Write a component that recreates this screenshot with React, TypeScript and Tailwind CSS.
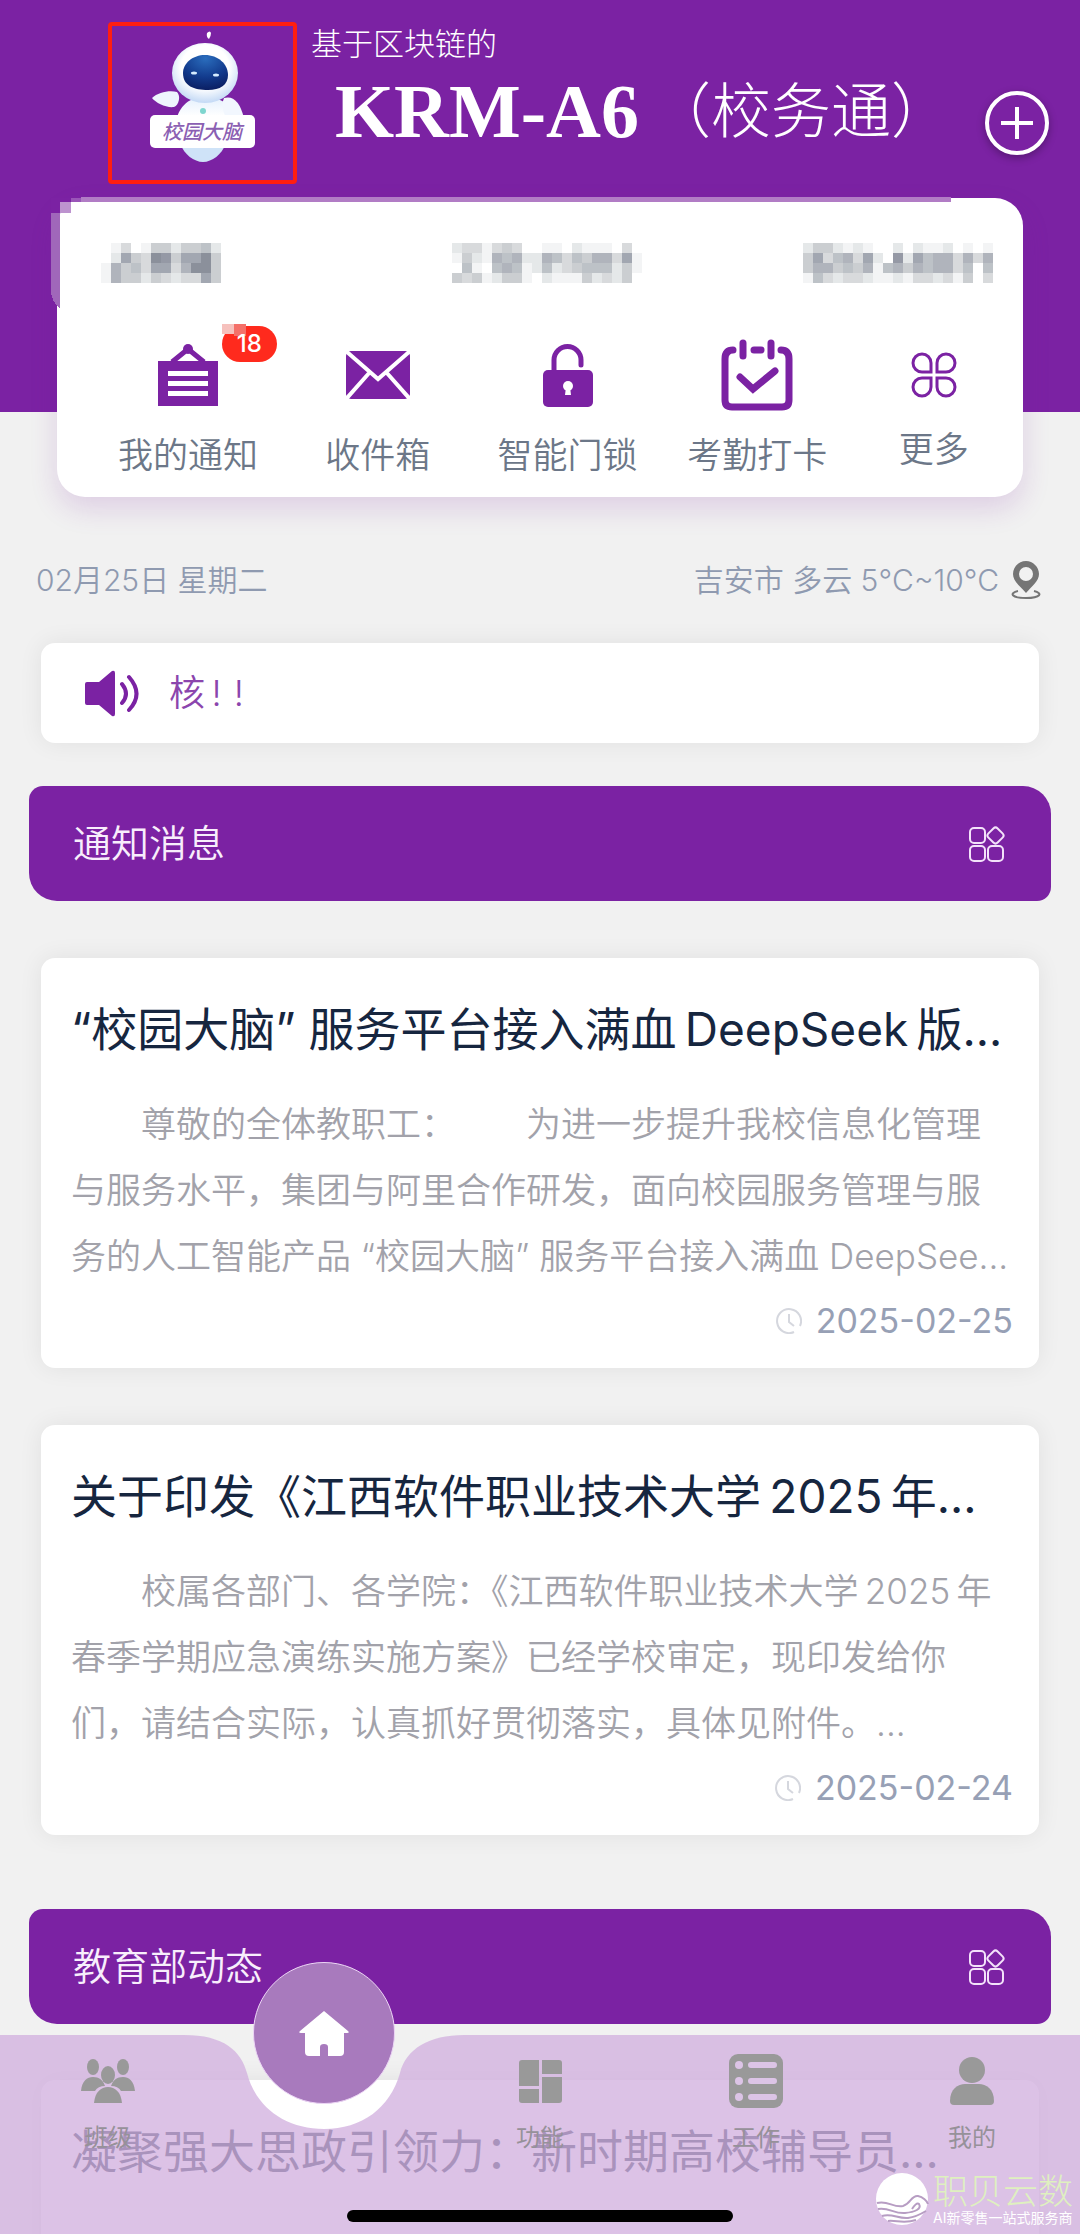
import React from 'react';
import { clsx } from 'clsx';

interface NewsItem {
  title: string;
  summary?: string;
  date?: string;
}

const NEWS: NewsItem[] = [
  {
    title: '“校园大脑” 服务平台接入满血\u2009DeepSeek\u2009版...',
    summary:
      '尊敬的全体教职工：\u2002\u2002\u2002\u2002为进一步提升我校信息化管理与服务水平，集团与阿里合作研发，面向校园服务管理与服务的人工智能产品 “校园大脑” 服务平台接入满血 DeepSee...',
    date: '2025-02-25',
  },
  {
    title: '关于印发《江西软件职业技术大学\u20092025\u2009年...',
    summary:
      '校属各部门、各学院：《江西软件职业技术大学\u20092025\u2009年春季学期应急演练实施方案》已经学校审定，现印发给你们，请结合实际，认真抓好贯彻落实，具体见附件。...',
    date: '2025-02-24',
  },
];

// Masked user fields, one digit per cell, higher is darker
const MASKED_NAME = ['013014424452', '027439847794', '164537736994', '164424323374'];
const MASKED_NUMBER = [
  '2331343001102111030',
  '1421656226535466371',
  '0510565125234555241',
  '4341244102111423240',
];
const MASKED_DEPT = [
  '2442121002021120101',
  '4735637208275663636',
  '4664546156465663505',
  '1532332112133231403',
];
const SHADES = [
  '#ffffff',
  '#f3f4f5',
  '#e5e8e9',
  '#d8dadc',
  '#cbced1',
  '#bdc2c7',
  '#b0b4bc',
  '#a2a7b1',
  '#9599a5',
  '#8b909b',
];

const Mosaic: React.FC<{ rows: string[]; label: string }> = ({ rows, label }) => (
  <svg
    role="img"
    aria-label={label}
    width={rows[0].length * 10}
    height={rows.length * 10}
    shapeRendering="crispEdges"
  >
    {rows.map((row, y) =>
      row.split('').map((cell, x) => (
        <rect key={`${x}-${y}`} x={x * 10} y={y * 10} width="10" height="10" fill={SHADES[Number(cell)]} />
      ))
    )}
  </svg>
);

const RobotLogo = () => (
  <svg viewBox="0 0 181 154" className="h-full w-full" role="img" aria-label="校园大脑">
    <defs>
      <radialGradient id="shell" cx="0.5" cy="0.4" r="0.6">
        <stop offset="0.6" stopColor="#ffffff" />
        <stop offset="1" stopColor="#c3d9f5" />
      </radialGradient>
      <linearGradient id="body" x1="0" y1="0" x2="0" y2="1">
        <stop offset="0" stopColor="#e4f0fd" />
        <stop offset="0.6" stopColor="#ffffff" />
        <stop offset="1" stopColor="#a9ccf0" />
      </linearGradient>
      <radialGradient id="visor" cx="0.5" cy="0.1" r="0.9">
        <stop offset="0" stopColor="#2a6dbd" />
        <stop offset="0.6" stopColor="#123a8c" />
        <stop offset="1" stopColor="#0b1f63" />
      </radialGradient>
    </defs>
    <path d="M95 7 q3 -3 4 0 q0 3 -2 6 q-3 -2 -2 -6z" fill="#fff" />
    <path d="M63 103 C64 82 76 71 92 71 C112 71 127 84 131 103z" fill="url(#body)" />
    <path d="M112 72 q14 -4 20 20 l0 6 l-18 -6 q-6 -12 -2 -20z" fill="#f2f7fe" />
    <ellipse cx="93" cy="47" rx="33" ry="30" fill="url(#shell)" />
    <path
      d="M71 47 C71 37 81 29 93 29 C106 29 116 38 116 49 C116 59 108 64 96 64 C82 64 71 60 71 47z"
      fill="url(#visor)"
    />
    <ellipse cx="82" cy="47" rx="3" ry="1.5" fill="#d6ecff" />
    <ellipse cx="104" cy="49" rx="3" ry="1.5" fill="#d6ecff" />
    <path d="M40 72 C46 66 58 64 65 66 C69 70 67 79 62 81 C54 82 44 77 40 72z" fill="#eef5fd" />
    <circle cx="91" cy="85" r="3" fill="#7fd6cf" />
    <path d="M69 119 H113 C110 128 100 136 91 136 C82 136 72 128 69 119z" fill="#cfe3f8" />
    <rect x="38" y="89" width="105" height="33" rx="5" fill="#fff" />
    <text x="90" y="113" textAnchor="middle" fontSize="20" fontStyle="italic" fontWeight="500" fill="#8b5fb3">
      校园大脑
    </text>
  </svg>
);

const NoticeIcon = () => (
  <svg width="60" height="62" viewBox="0 0 60 62" fill="#7b22a3">
    <path d="M14 18 L30 5 L46 18" fill="none" stroke="#7b22a3" strokeWidth="5" />
    <circle cx="30" cy="5" r="5" />
    <path fillRule="evenodd" d="M0 17H60V62H0Z M10 27V32H50V27Z M10 37V42H50V37Z M10 47V52H50V47Z" />
  </svg>
);

const MailIcon = () => (
  <svg width="64" height="48" viewBox="0 0 64 48">
    <rect width="64" height="48" rx="5" fill="#7b22a3" />
    <path d="M1 1 L32 28 L63 1 M1 47 L24 21 M63 47 L40 21" fill="none" stroke="#fff" strokeWidth="4" />
  </svg>
);

const LockIcon = () => (
  <svg width="50" height="64" viewBox="0 0 50 64">
    <path d="M11 30 V17 a13 13 0 0 1 27 0 V22" fill="none" stroke="#7b22a3" strokeWidth="5" strokeLinecap="round" />
    <rect y="27" width="50" height="37" rx="5" fill="#7b22a3" />
    <circle cx="25" cy="43" r="5" fill="#fff" />
    <path d="M23 44 H27 L28 52 H22Z" fill="#fff" />
  </svg>
);

const CalendarIcon = () => (
  <svg width="72" height="72" viewBox="0 0 72 72" fill="none" stroke="#7b22a3" strokeWidth="7" strokeLinecap="round">
    <path d="M12 11 Q4 11 4 20 V61 Q4 68 11 68 H61 Q68 68 68 61 V20 Q68 11 60 11" />
    <path d="M22 4 V17 M50 4 V17 M33 11 H40 M19 38 L32 50 L54 32" />
  </svg>
);

const MoreIcon = () => (
  <svg width="46" height="46" viewBox="0 0 46 46" fill="none" stroke="#7b22a3" strokeWidth="3">
    <path d="M20 20 H11 A9 9 0 1 1 20 11Z" />
    <path d="M26 20 H35 A9 9 0 1 0 26 11Z" />
    <path d="M20 26 H11 A9 9 0 1 0 20 35Z" />
    <path d="M26 26 H35 A9 9 0 1 1 26 35Z" />
  </svg>
);

const PinIcon = () => (
  <svg width="30" height="38" viewBox="0 0 30 38">
    <path
      fillRule="evenodd"
      fill="#757575"
      d="M15 0 C8 0 2 6 2 13 C2 20 9 25 15 32 C21 25 28 20 28 13 C28 6 22 0 15 0Z M15 6 A7 7 0 1 1 15 20 A7 7 0 1 1 15 6Z"
    />
    <path d="M7 30 C-2 32 0 37 15 37 C30 37 32 32 23 30" fill="none" stroke="#757575" strokeWidth="2" />
  </svg>
);

const SpeakerIcon = () => (
  <svg width="54" height="47" viewBox="0 0 54 47">
    <path d="M2 12 H14 L27 1 Q30 0 30 3 V44 Q30 47 27 46 L14 35 H2 Q0 35 0 33 V14 Q0 12 2 12Z" fill="#7b22a3" />
    <path
      d="M37 14 Q45 24 37 33 M44 7 Q59 24 44 40"
      fill="none"
      stroke="#7b22a3"
      strokeWidth="4"
      strokeLinecap="round"
    />
  </svg>
);

const GridIcon = () => (
  <svg width="36" height="36" viewBox="0 0 36 36" fill="none" stroke="#f3e2fa" strokeWidth="2">
    <rect x="1" y="2" width="15" height="15" rx="4" />
    <rect x="1" y="20" width="15" height="15" rx="4" />
    <rect x="19" y="20" width="15" height="15" rx="4" />
    <rect x="20" y="3" width="13" height="13" rx="3" transform="rotate(45 26.5 9.5)" />
  </svg>
);

const ClockIcon = () => (
  <svg width="26" height="26" viewBox="0 0 26 26" fill="none" stroke="#d5d7de" strokeWidth="2">
    <path d="M18 24 A12 12 0 1 1 24 18" />
    <path d="M13 6 V14 L18 18" />
  </svg>
);

const ClassIcon = () => (
  <svg width="54" height="44" viewBox="0 0 54 44" fill="#999">
    <ellipse cx="12" cy="8" rx="6" ry="8" />
    <ellipse cx="42" cy="8" rx="6" ry="8" />
    <path d="M0 32 C1 22 6 18 12 18 C18 18 22 21 24 27 Q17 27 14 32Z" />
    <path d="M54 32 C53 22 48 18 42 18 C36 18 32 21 30 27 Q37 27 40 32Z" />
    <ellipse cx="27" cy="16" rx="7" ry="9" />
    <path d="M13 44 C14 33 20 28 27 28 C34 28 40 33 41 44Z" />
  </svg>
);

const FunctionIcon = () => (
  <svg width="43" height="43" viewBox="0 0 43 43" fill="#999">
    <path d="M3 0H20V26H0V3Q0 0 3 0Z" />
    <path d="M0 29H20V43H3Q0 43 0 40Z" />
    <path d="M23 0H40Q43 0 43 3V14H23Z" />
    <path d="M23 17H43V40Q43 43 40 43H23Z" />
  </svg>
);

const WorkIcon = () => (
  <svg width="54" height="54" viewBox="0 0 54 54">
    <rect width="54" height="54" rx="9" fill="#999" />
    <g stroke="#dcc4e6" strokeWidth="6" strokeLinecap="round">
      <path d="M22 11H45M22 27H45M22 43H45" />
    </g>
    <g fill="#dcc4e6">
      <circle cx="10" cy="11" r="4" />
      <circle cx="10" cy="27" r="4" />
      <circle cx="10" cy="43" r="4" />
    </g>
  </svg>
);

const UserIcon = () => (
  <svg width="44" height="48" viewBox="0 0 44 48" fill="#999">
    <circle cx="22" cy="13" r="13" />
    <path d="M0 44 C0 32 8 27 15 27 H29 C36 27 44 32 44 44 Q44 48 40 48 H4 Q0 48 0 44Z" />
  </svg>
);

const HomeIcon = () => (
  <svg width="50" height="45" viewBox="0 0 50 45" fill="#fff">
    <path d="M25 0 L49 20 Q51 22 48 22 H45 V41 Q45 45 41 45 H29 V36 Q29 33 25 33 Q21 33 21 36 V45 H10 Q6 45 6 41 V22 H2 Q-1 22 1 20Z" />
  </svg>
);

const SHORTCUTS = [
  { label: '我的通知', icon: <NoticeIcon />, badge: 18 },
  { label: '收件箱', icon: <MailIcon /> },
  { label: '智能门锁', icon: <LockIcon /> },
  { label: '考勤打卡', icon: <CalendarIcon /> },
  { label: '更多', icon: <MoreIcon />, compact: true },
];

const TABS = [
  { label: '班级', icon: <ClassIcon /> },
  null,
  { label: '功能', icon: <FunctionIcon /> },
  { label: '工作', icon: <WorkIcon /> },
  { label: '我的', icon: <UserIcon /> },
];

const SectionBar: React.FC<{ title: string; className?: string }> = ({ title, className }) => (
  <div
    className={clsx(
      'mx-[29px] flex h-[115px] items-center justify-between rounded-tl-[14px] rounded-tr-[28px] rounded-br-[14px] rounded-bl-[28px] bg-[#7b22a3] pr-[46px] pl-[44px]',
      className
    )}
  >
    <h2 className="text-[38px] font-[350] text-[#f8eefc]">{title}</h2>
    <button type="button" aria-label={`${title}更多`}>
      <GridIcon />
    </button>
  </div>
);

const NewsCard: React.FC<{ item: NewsItem }> = ({ item }) => (
  <article className="mx-[41px] rounded-[14px] bg-white px-[30px] pt-[38px] pb-[23px] shadow-[0_0_24px_rgba(0,0,0,0.07)]">
    <h3 className="text-[46px] leading-[66px] whitespace-nowrap text-[#16263f]">{item.title}</h3>
    <p className="mt-[29px] min-h-[198px] indent-[70px] text-[35px] leading-[66px] font-[350] text-[#a2a2aa]">
      {item.summary}
    </p>
    {item.date && (
      <div className="mt-2 -mr-1 flex items-center justify-end gap-[14px]">
        <ClockIcon />
        <time className="text-[34px] leading-[48px] text-[#97a0b5]">{item.date}</time>
      </div>
    )}
  </article>
);

const Header = () => (
  <header className="flex h-[412px] items-start bg-[#7b22a3] pt-[22px] pr-[31px] pl-[108px] text-white">
    <div className="h-[162px] w-[189px] shrink-0 rounded-sm border-4 border-[#ff1e10]">
      <RobotLogo />
    </div>
    <div className="ml-[14px] flex-1 whitespace-nowrap">
      <p className="text-[31px] leading-[44px] font-light">基于区块链的</p>
      <h1 className="ml-6 flex items-center gap-3 leading-[90px]">
        <span className="font-['Liberation_Serif',serif] text-[76px] font-bold">KRM-A6</span>
        <span className="text-[60px] font-light">（校务通）</span>
      </h1>
    </div>
    <button
      type="button"
      aria-label="添加"
      className="mt-[69px] flex size-16 shrink-0 items-center justify-center rounded-full border-4 border-white shadow-[0_3px_8px_rgba(0,0,0,0.3)]"
    >
      <svg width="32" height="32" viewBox="0 0 32 32" stroke="#fff" strokeWidth="4">
        <path d="M16 0V32M0 16H32" />
      </svg>
    </button>
  </header>
);

const ProfileCard = () => (
  <section className="relative mx-[57px] -mt-[214px] rounded-[28px] bg-white pt-[45px] pb-4 shadow-[0_12px_28px_rgba(123,34,163,0.16)]">
    {/* Leftover edges of the masked area */}
    <div className="absolute -top-px right-[72px] left-6 h-[5px] bg-[#b17cc5]" />
    <svg className="absolute top-0 -left-[6px]" width="30" height="110" shapeRendering="crispEdges">
      <path d="M0 15H9V110Q0 104 0 92Z" fill="#a067ba" />
      <rect x="0" y="0" width="30" height="15" fill="#7b22a3" />
      <rect x="9" y="4" width="21" height="11" fill="#fff" />
      <rect x="9" y="4" width="11" height="11" fill="#bd93cf" />
      <rect x="20" y="-1" width="10" height="5" fill="#9a55b8" />
    </svg>
    <div className="grid grid-cols-[1fr_auto_1fr] pr-[30px] pl-[44px]">
      <Mosaic rows={MASKED_NAME} label="姓名" />
      <Mosaic rows={MASKED_NUMBER} label="工号" />
      <div className="flex justify-end">
        <Mosaic rows={MASKED_DEPT} label="部门" />
      </div>
    </div>
    <nav className="mt-14 grid grid-cols-[7fr_7fr_7fr_7fr_6fr] items-center pr-2 pl-9">
      {SHORTCUTS.map(({ label, icon, badge, compact }) => (
        <a key={label} href="#" className="flex flex-col items-center">
          <span className={clsx('relative flex items-center justify-center', compact ? 'h-[60px]' : 'h-[72px]')}>
            {icon}
            {badge && (
              <span className="absolute -top-[13px] left-full ml-1 flex h-9 w-[55px] items-center justify-center rounded-full bg-[#ff2a1d] text-[24px] font-medium text-white">
                <svg className="absolute -top-[2px] left-0" width="24" height="12" shapeRendering="crispEdges">
                  <rect width="12" height="10" fill="#f6c1bd" />
                  <rect x="12" width="12" height="12" fill="#f47069" />
                </svg>
                <span className="relative">{badge}</span>
              </span>
            )}
          </span>
          <span className="mt-[18px] text-[35px] leading-[52px] font-[350] text-[#6c7788]">{label}</span>
        </a>
      ))}
    </nav>
  </section>
);

const TabBar = () => (
  <nav className="absolute inset-x-0 bottom-0 h-[199px]">
    {/* Background with the dip under the home button */}
    <div className="absolute inset-0 flex">
      <div className="w-[calc(30%-140px)] bg-[#d2b1df]/[0.785]" />
      <svg width="280" height="199" viewBox="0 0 280 199" className="shrink-0">
        <path
          d="M0 0 C40 0 57 16 63 38 C72 73 102 94 140 94 C178 94 206 73 216 38 C222 14 245 0 280 0 V199 H0Z"
          fill="#d2b1df"
          fillOpacity="0.785"
        />
      </svg>
      <div className="flex-1 bg-[#d2b1df]/[0.785]" />
    </div>
    <div className="relative grid grid-cols-5 pt-[19px]">
      {TABS.map((tab) =>
        tab ? (
          <a key={tab.label} href="#" className="flex flex-col items-center">
            <span className="flex h-[54px] items-center">{tab.icon}</span>
            <span className="mt-3 text-[24px] leading-9 text-[#969199]">{tab.label}</span>
          </a>
        ) : (
          <div key="home" className="flex justify-center">
            <a
              href="#"
              aria-label="首页"
              className="-mt-[92px] flex size-[142px] items-center justify-center rounded-full border border-[#ecd5f5] bg-[#a87abd]"
            >
              <HomeIcon />
            </a>
          </div>
        )
      )}
    </div>
    <div className="absolute bottom-3 left-1/2 h-3 w-[386px] -translate-x-1/2 rounded-full bg-black" />
  </nav>
);

const Watermark = () => (
  <div className="absolute right-[7px] bottom-2 flex items-center gap-1">
    <svg width="53" height="53" viewBox="0 0 53 53">
      <circle cx="26" cy="26" r="26" fill="#fff" />
      <g fill="none" stroke="#b79dc3" strokeWidth="2">
        <path d="M1 30 C12 27 17 35 27 33 C35 31 35 22 42 23 C47 24 51 28 52 31" />
        <path d="M2 36 C13 34 18 41 29 40 C39 39 46 36 43 31 C41 29 38 33 36 36" />
        <path d="M6 43 C16 40 22 46 32 45 C40 44 45 41 50 38" />
        <path d="M12 48 C20 47 28 51 40 47" />
      </g>
    </svg>
    <div className="whitespace-nowrap">
      <p className="text-[35px] leading-[38px] font-light text-[#dff0c0]">职贝云数</p>
      <p className="text-[14px] leading-4 text-white">AI新零售一站式服务商</p>
    </div>
  </div>
);

export default function App() {
  return (
    <div
      lang="zh-CN"
      className="relative h-screen overflow-hidden bg-[#f1f1f1] font-['Inter','Noto_Sans_CJK_SC',sans-serif]"
    >
      <main>
        <Header />
        <ProfileCard />

        <div className="mt-[60px] flex items-center justify-between pr-[39px] pl-9 text-[30px] leading-[46px] font-[350] text-[#8f9ab0]">
          <span>02月25日 星期二</span>
          <span className="flex items-center gap-3">
            吉安市 多云 5°C~10°C
            <PinIcon />
          </span>
        </div>

        <div className="mx-[41px] mt-10 flex h-[100px] items-center gap-[30px] rounded-[14px] bg-white pl-11 shadow-[0_0_24px_rgba(0,0,0,0.07)]">
          <SpeakerIcon />
          <p className="text-[36px] font-[350] text-[#8b45ad]">核{'\u2009!\u2004!'}</p>
        </div>

        <SectionBar title="通知消息" className="mt-[43px]" />
        <div className="mt-[57px] flex flex-col gap-[57px]">
          {NEWS.map((item) => (
            <NewsCard key={item.date} item={item} />
          ))}
        </div>

        <SectionBar title="教育部动态" className="mt-[74px] mb-[56px]" />
        <NewsCard item={{ title: '凝聚强大思政引领力：新时期高校辅导员...' }} />
      </main>

      <TabBar />
      <Watermark />
    </div>
  );
}
